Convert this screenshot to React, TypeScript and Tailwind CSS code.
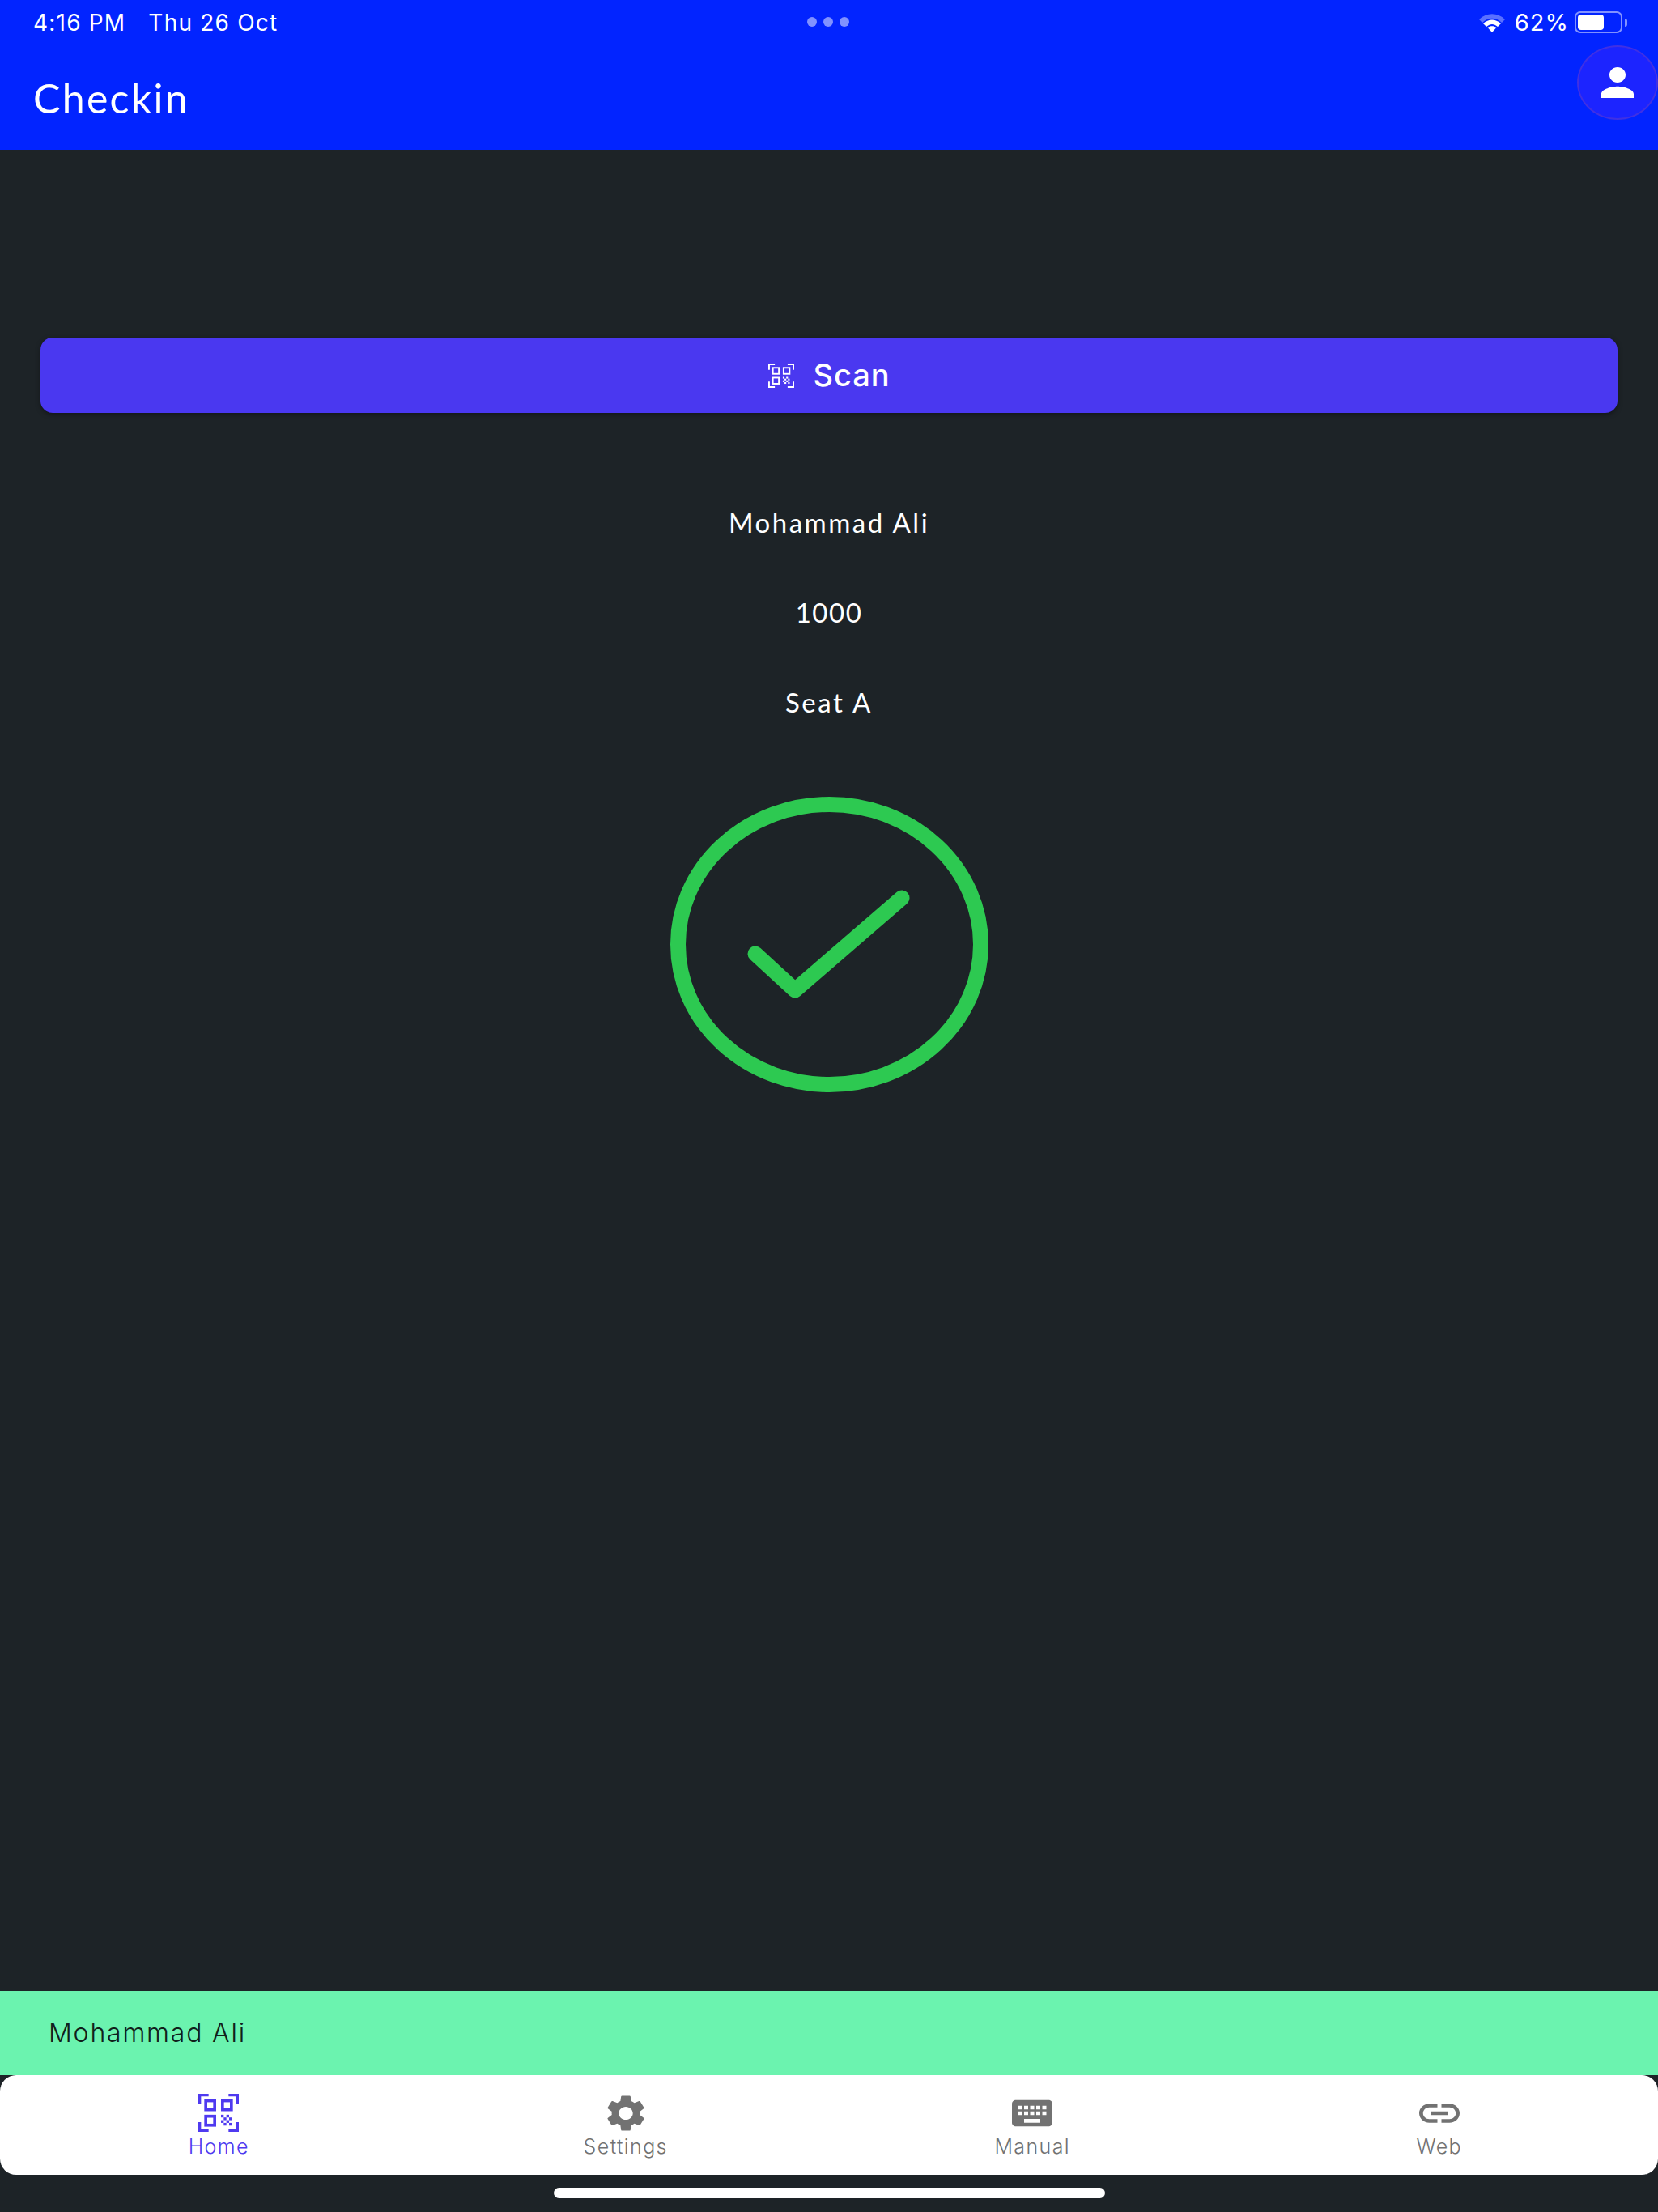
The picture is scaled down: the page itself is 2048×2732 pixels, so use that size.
import { MdSettings, MdKeyboard, MdLink } from "react-icons/md";

function Qr({ className, fine }: { className: string; fine?: boolean }) {
  const t = fine ? 9 : 11;
  const c = fine ? 9 : 10;
  const sq = (x: number, y: number) => (
    <rect x={x + t / 2} y={y + t / 2} width={44 - t} height={44 - t} fill="none" stroke="currentColor" strokeWidth={t} />
  );
  const cells = [
    [84, 77], [104, 77], [94, 87], [114, 87], [84, 97], [104, 97], [94, 107], [114, 107],
  ];
  return (
    <svg viewBox="0 0 150 140" preserveAspectRatio="none" className={className}>
      <g fill="none" stroke="currentColor" strokeWidth={c}>
        <path d={`M${c / 2} 36V${c / 2}H38`} />
        <path d={`M112 ${c / 2}H${150 - c / 2}V36`} />
        <path d={`M${c / 2} 104V${140 - c / 2}H38`} />
        <path d={`M112 ${140 - c / 2}H${150 - c / 2}V104`} />
      </g>
      {sq(22, 20)}
      {sq(84, 20)}
      {sq(22, 77)}
      <g fill="currentColor">
        {cells.map(([x, y]) => (
          <rect key={`${x}-${y}`} x={x} y={y} width="10" height="10" />
        ))}
      </g>
    </svg>
  );
}

function Tab({ label, active, children }: { label: string; active?: boolean; children: React.ReactNode }) {
  return (
    <div className={`flex-1 flex flex-col items-center ${active ? "text-[#4f3af0]" : "text-[#727272]"}`}>
      <div className="h-[47px] w-full flex items-center justify-center">{children}</div>
      <span className="mt-[5px] text-[25px] leading-[26px] tracking-[1.4px] font-light font-['Inter',sans-serif]">{label}</span>
    </div>
  );
}

export default function App() {
  return (
    <div className="w-full h-[2732px] flex flex-col bg-[#1d2327] overflow-hidden font-['Inter',sans-serif]">
      <header className="h-[185px] bg-[#0224ff] text-white flex flex-col shrink-0">
        <div className="h-[56px] relative flex items-center pl-[41px] pr-[38px] pb-[1px] text-[28px] tracking-[1.2px]">
          <span>4:16 PM</span>
          <span className="ml-[28px]">Thu 26 Oct</span>
          <div className="absolute left-[997px] top-[21px] flex gap-[8px]">
            <span className="w-[12px] h-[12px] rounded-full bg-white/50" />
            <span className="w-[12px] h-[12px] rounded-full bg-white/50" />
            <span className="w-[12px] h-[12px] rounded-full bg-white/50" />
          </div>
          <div className="ml-auto flex items-center">
            <svg viewBox="0 0 34 24" className="w-[34px] h-[24px]">
              <path d="M1 8C10-1 24-1 33 8L29 12C22 5 12 5 5 12Z" fill="#ffffff" opacity="0.35" />
              <path d="M6 13C13 7 21 7 28 13L24 17C19 13 15 13 10 17Z" fill="#ffffff" />
              <path d="M11.5 18C15 15.5 19 15.5 22.5 18L17 24Z" fill="#ffffff" />
            </svg>
            <span className="ml-[11px] text-[29px] tracking-[1px]">62%</span>
            <div className="ml-[7px] w-[59px] h-[27px] rounded-[7px] border-2 border-white/50 p-[2px]">
              <div className="w-[32px] h-full rounded-[4px] bg-white" />
            </div>
            <div className="ml-[3px] w-[3px] h-[10px] rounded-r-full bg-white/50" />
          </div>
        </div>
        <div className="flex-1 flex items-start justify-between pl-[41px]">
          <h1 className="mt-[36px] text-[50px] leading-[58px] font-['Lato',sans-serif] tracking-[2.3px]">Checkin</h1>
          <div className="w-[100px] h-[92px] rounded-[50%] bg-[#1c24ff] border-2 border-[#4030e4] flex items-center justify-center">
            <svg viewBox="4 4 16 16" preserveAspectRatio="none" className="w-[40px] h-[38px]" fill="#ffffff">
              <path d="M12 12c2.21 0 4-1.79 4-4s-1.79-4-4-4-4 1.79-4 4 1.79 4 4 4zm0 2c-2.67 0-8 1.34-8 4v2h16v-2c0-2.66-5.33-4-8-4z" />
            </svg>
          </div>
        </div>
      </header>

      <main className="flex-1 flex flex-col items-center pt-[232px] px-[50px] text-white">
        <button className="w-full h-[93px] rounded-[15px] bg-[#4a38f0] shadow-[0_2px_6px_rgba(0,0,0,0.4)] flex items-center justify-center">
          <Qr fine className="w-[32px] h-[30px] text-white" />
          <span className="ml-[24px] text-[38px] font-medium font-['Inter',sans-serif] tracking-[0.9px]">Scan</span>
        </button>
        <p className="mt-[115px] text-[33px] leading-[40px] tracking-[2.5px] font-['Lato',sans-serif]">Mohammad Ali</p>
        <p className="mt-[71px] text-[33px] leading-[40px] tracking-[1.5px] font-['Lato',sans-serif]">1000</p>
        <p className="mt-[71px] text-[33px] leading-[40px] tracking-[2.5px] font-['Lato',sans-serif]">Seat A</p>
        <svg viewBox="0 0 393 365" className="mt-[97px] w-[393px] h-[365px]" fill="none" stroke="#2dc951" strokeWidth="19" strokeLinecap="round" strokeLinejoin="round">
          <ellipse cx="196.5" cy="182.5" rx="187" ry="173" />
          <path d="M105 194L154 239L286 125" />
        </svg>
      </main>

      <div className="h-[104px] bg-[#6bf3af] flex items-center pl-[60px] text-[#10201a] text-[32px] font-light tracking-[1.8px] shrink-0">
        Mohammad Ali
      </div>
      <nav className="h-[123px] rounded-[20px] bg-white flex px-[19px] pt-[23px] shrink-0">
        <Tab label="Home" active>
          <Qr className="w-[50px] h-[47px]" />
        </Tab>
        <Tab label="Settings">
          <MdSettings className="w-[58px] h-[54px]" preserveAspectRatio="none" />
        </Tab>
        <Tab label="Manual">
          <MdKeyboard className="w-[60px] h-[56px]" preserveAspectRatio="none" />
        </Tab>
        <Tab label="Web">
          <MdLink className="w-[60px] h-[56px]" preserveAspectRatio="none" />
        </Tab>
      </nav>
      <div className="h-[46px] flex justify-center pt-[16px] shrink-0">
        <div className="w-[681px] h-[13px] rounded-full bg-white" />
      </div>
    </div>
  );
}
